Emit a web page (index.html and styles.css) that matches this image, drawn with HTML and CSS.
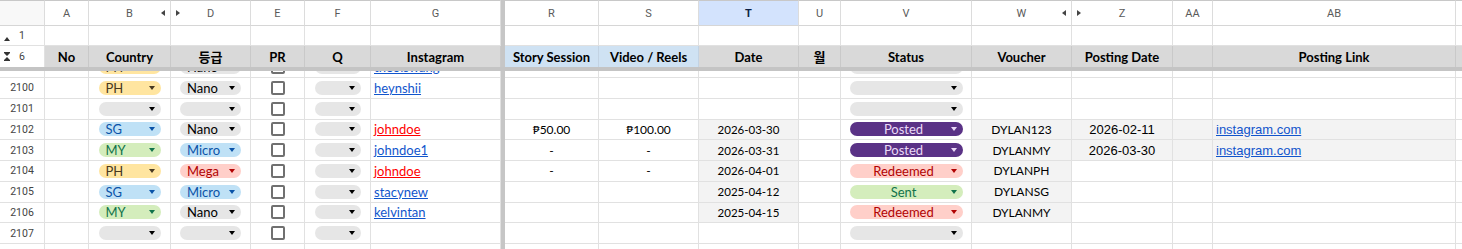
FILE: index.html
```html
<!DOCTYPE html>
<html lang="en">
<head>
<meta charset="utf-8">
<title>Sheet</title>
<link rel="stylesheet" href="styles.css">
</head>
<body>
<div class="sheet">
  <div class="row colhdr">
    <div class="c rh corner"></div>
    <div class="c">A</div>
    <div class="c hdr3"><span></span><span>B</span><svg class="tl" width="4" height="6" viewBox="0 0 4 6"><path d="M4 0V6L0 3Z"/></svg></div>
    <div class="c hdr3"><svg class="tr" width="4" height="6" viewBox="0 0 4 6"><path d="M0 0V6L4 3Z"/></svg><span>D</span><span></span></div>
    <div class="c">E</div>
    <div class="c">F</div>
    <div class="c">G</div>
    <div class="c fz"></div>
    <div class="c">R</div>
    <div class="c">S</div>
    <div class="c sel">T</div>
    <div class="c">U</div>
    <div class="c">V</div>
    <div class="c hdr3"><span></span><span>W</span><svg class="tl" width="4" height="6" viewBox="0 0 4 6"><path d="M4 0V6L0 3Z"/></svg></div>
    <div class="c hdr3"><svg class="tr" width="4" height="6" viewBox="0 0 4 6"><path d="M0 0V6L4 3Z"/></svg><span>Z</span><span></span></div>
    <div class="c">AA</div>
    <div class="c">AB</div>
    <div class="c end"></div>
  </div>

  <div class="row r1">
    <div class="c rh rh3"><svg class="up" width="6" height="4" viewBox="0 0 6 4"><path d="M0 4L3 0L6 4Z"/></svg><span>1</span><span></span></div>
    <div class="c"></div><div class="c"></div><div class="c"></div><div class="c"></div><div class="c"></div><div class="c"></div>
    <div class="c fz"></div>
    <div class="c"></div><div class="c"></div><div class="c"></div><div class="c"></div><div class="c"></div><div class="c"></div><div class="c"></div><div class="c"></div><div class="c"></div>
    <div class="c end"></div>
  </div>

  <div class="row r6">
    <div class="c rh rh3"><svg class="hg" width="6" height="9" viewBox="0 0 6 9"><path d="M0 0H6V1L3 4L0 1Z M0 9H6V8L3 5L0 8Z"/></svg><span>6</span><span></span></div>
    <div class="c">No</div>
    <div class="c">Country</div>
    <div class="c">등급</div>
    <div class="c">PR</div>
    <div class="c">Q</div>
    <div class="c">Instagram</div>
    <div class="c fz"></div>
    <div class="c blue">Story Session</div>
    <div class="c blue">Video / Reels</div>
    <div class="c">Date</div>
    <div class="c">월</div>
    <div class="c">Status</div>
    <div class="c">Voucher</div>
    <div class="c">Posting Date</div>
    <div class="c"></div>
    <div class="c">Posting Link</div>
    <div class="c end"></div>
  </div>

  <div class="freeze"></div>

  <div class="viewport">
    <div class="row br partial">
      <div class="c rh">2099</div>
      <div class="c"></div>
      <div class="c"><span class="chip w-b ph"><span class="t">PH</span><i class="caret"></i></span></div>
      <div class="c"><span class="chip w-d"><span class="t">Nano</span><i class="caret"></i></span></div>
      <div class="c"><span class="cb"></span></div>
      <div class="c"><span class="chip w-f"><span class="t"></span><i class="caret"></i></span></div>
      <div class="c l"><span class="lnk">theoiswang</span></div>
      <div class="c fz"></div>
      <div class="c"></div><div class="c"></div><div class="c"></div><div class="c"></div>
      <div class="c"><span class="chip w-v"><span class="t"></span><i class="caret"></i></span></div>
      <div class="c"></div><div class="c"></div><div class="c"></div><div class="c"></div>
      <div class="c end"></div>
    </div>

    <div class="row br">
      <div class="c rh">2100</div>
      <div class="c"></div>
      <div class="c"><span class="chip w-b ph"><span class="t">PH</span><i class="caret"></i></span></div>
      <div class="c"><span class="chip w-d"><span class="t">Nano</span><i class="caret"></i></span></div>
      <div class="c"><span class="cb"></span></div>
      <div class="c"><span class="chip w-f"><span class="t"></span><i class="caret"></i></span></div>
      <div class="c l"><span class="lnk">heynshii</span></div>
      <div class="c fz"></div>
      <div class="c"></div><div class="c"></div><div class="c"></div><div class="c"></div>
      <div class="c"><span class="chip w-v"><span class="t"></span><i class="caret"></i></span></div>
      <div class="c"></div><div class="c"></div><div class="c"></div><div class="c"></div>
      <div class="c end"></div>
    </div>

    <div class="row br">
      <div class="c rh">2101</div>
      <div class="c"></div>
      <div class="c"><span class="chip w-b"><span class="t"></span><i class="caret"></i></span></div>
      <div class="c"><span class="chip w-d"><span class="t"></span><i class="caret"></i></span></div>
      <div class="c"><span class="cb"></span></div>
      <div class="c"><span class="chip w-f"><span class="t"></span><i class="caret"></i></span></div>
      <div class="c l"></div>
      <div class="c fz"></div>
      <div class="c"></div><div class="c"></div><div class="c"></div><div class="c"></div>
      <div class="c"><span class="chip w-v"><span class="t"></span><i class="caret"></i></span></div>
      <div class="c"></div><div class="c"></div><div class="c"></div><div class="c"></div>
      <div class="c end"></div>
    </div>

    <div class="row br">
      <div class="c rh">2102</div>
      <div class="c"></div>
      <div class="c"><span class="chip w-b sg"><span class="t">SG</span><i class="caret"></i></span></div>
      <div class="c"><span class="chip w-d"><span class="t">Nano</span><i class="caret"></i></span></div>
      <div class="c"><span class="cb"></span></div>
      <div class="c"><span class="chip w-f"><span class="t"></span><i class="caret"></i></span></div>
      <div class="c l"><span class="lnk red">johndoe</span></div>
      <div class="c fz"></div>
      <div class="c num">₱50.00</div>
      <div class="c num">₱100.00</div>
      <div class="c g dt">2026-03-30</div>
      <div class="c"></div>
      <div class="c"><span class="chip w-v ctr posted"><span class="t">Posted</span><i class="caret"></i></span></div>
      <div class="c g vc">DYLAN123</div>
      <div class="c g ar">2026-02-11</div>
      <div class="c g"></div>
      <div class="c g l ar"><span class="lnk">instagram.com</span></div>
      <div class="c end"></div>
    </div>

    <div class="row br">
      <div class="c rh">2103</div>
      <div class="c"></div>
      <div class="c"><span class="chip w-b my"><span class="t">MY</span><i class="caret"></i></span></div>
      <div class="c"><span class="chip w-d sg"><span class="t">Micro</span><i class="caret"></i></span></div>
      <div class="c"><span class="cb"></span></div>
      <div class="c"><span class="chip w-f"><span class="t"></span><i class="caret"></i></span></div>
      <div class="c l"><span class="lnk">johndoe1</span></div>
      <div class="c fz"></div>
      <div class="c num">-</div>
      <div class="c num">-</div>
      <div class="c g dt">2026-03-31</div>
      <div class="c"></div>
      <div class="c"><span class="chip w-v ctr posted"><span class="t">Posted</span><i class="caret"></i></span></div>
      <div class="c g vc">DYLANMY</div>
      <div class="c g ar">2026-03-30</div>
      <div class="c g"></div>
      <div class="c g l ar"><span class="lnk">instagram.com</span></div>
      <div class="c end"></div>
    </div>

    <div class="row br">
      <div class="c rh">2104</div>
      <div class="c"></div>
      <div class="c"><span class="chip w-b ph"><span class="t">PH</span><i class="caret"></i></span></div>
      <div class="c"><span class="chip w-d rd"><span class="t">Mega</span><i class="caret"></i></span></div>
      <div class="c"><span class="cb"></span></div>
      <div class="c"><span class="chip w-f"><span class="t"></span><i class="caret"></i></span></div>
      <div class="c l"><span class="lnk red">johndoe</span></div>
      <div class="c fz"></div>
      <div class="c num">-</div>
      <div class="c num">-</div>
      <div class="c g dt">2026-04-01</div>
      <div class="c"></div>
      <div class="c"><span class="chip w-v ctr rd"><span class="t">Redeemed</span><i class="caret"></i></span></div>
      <div class="c g vc">DYLANPH</div>
      <div class="c"></div>
      <div class="c"></div>
      <div class="c"></div>
      <div class="c end"></div>
    </div>

    <div class="row br">
      <div class="c rh">2105</div>
      <div class="c"></div>
      <div class="c"><span class="chip w-b sg"><span class="t">SG</span><i class="caret"></i></span></div>
      <div class="c"><span class="chip w-d sg"><span class="t">Micro</span><i class="caret"></i></span></div>
      <div class="c"><span class="cb"></span></div>
      <div class="c"><span class="chip w-f"><span class="t"></span><i class="caret"></i></span></div>
      <div class="c l"><span class="lnk">stacynew</span></div>
      <div class="c fz"></div>
      <div class="c"></div>
      <div class="c"></div>
      <div class="c g dt">2025-04-12</div>
      <div class="c"></div>
      <div class="c"><span class="chip w-v ctr my"><span class="t">Sent</span><i class="caret"></i></span></div>
      <div class="c g vc">DYLANSG</div>
      <div class="c"></div>
      <div class="c"></div>
      <div class="c"></div>
      <div class="c end"></div>
    </div>

    <div class="row br">
      <div class="c rh">2106</div>
      <div class="c"></div>
      <div class="c"><span class="chip w-b my"><span class="t">MY</span><i class="caret"></i></span></div>
      <div class="c"><span class="chip w-d"><span class="t">Nano</span><i class="caret"></i></span></div>
      <div class="c"><span class="cb"></span></div>
      <div class="c"><span class="chip w-f"><span class="t"></span><i class="caret"></i></span></div>
      <div class="c l"><span class="lnk">kelvintan</span></div>
      <div class="c fz"></div>
      <div class="c"></div>
      <div class="c"></div>
      <div class="c g dt">2025-04-15</div>
      <div class="c"></div>
      <div class="c"><span class="chip w-v ctr rd"><span class="t">Redeemed</span><i class="caret"></i></span></div>
      <div class="c g vc">DYLANMY</div>
      <div class="c"></div>
      <div class="c"></div>
      <div class="c"></div>
      <div class="c end"></div>
    </div>

    <div class="row br">
      <div class="c rh">2107</div>
      <div class="c"></div>
      <div class="c"><span class="chip w-b"><span class="t"></span><i class="caret"></i></span></div>
      <div class="c"><span class="chip w-d"><span class="t"></span><i class="caret"></i></span></div>
      <div class="c"><span class="cb"></span></div>
      <div class="c"><span class="chip w-f"><span class="t"></span><i class="caret"></i></span></div>
      <div class="c l"></div>
      <div class="c fz"></div>
      <div class="c"></div><div class="c"></div><div class="c"></div><div class="c"></div>
      <div class="c"><span class="chip w-v"><span class="t"></span><i class="caret"></i></span></div>
      <div class="c"></div><div class="c"></div><div class="c"></div><div class="c"></div>
      <div class="c end"></div>
    </div>

    <div class="row br">
      <div class="c rh">2108</div>
      <div class="c"></div><div class="c"></div><div class="c"></div><div class="c"></div><div class="c"></div><div class="c"></div>
      <div class="c fz"></div>
      <div class="c"></div><div class="c"></div><div class="c"></div><div class="c"></div><div class="c"></div><div class="c"></div><div class="c"></div><div class="c"></div><div class="c"></div>
      <div class="c end"></div>
    </div>
  </div>
</div>
</body>
</html>
```

FILE: styles.css
```css
* { box-sizing: border-box; }

html, body {
  margin: 0;
  background: #ffffff;
  overflow: hidden;
}

body {
  width: 1462px;
  height: 249px;
  font-family: Lato, "Noto Sans CJK KR", sans-serif;
  font-size: 13px;
  color: #000000;
}

.row {
  display: grid;
  grid-template-columns: 45px 44px 82px 80px 54px 66px 130px 4px 94px 100px 100px 42px 131px 100px 101px 40px 243px 6px;
}

.c {
  display: flex;
  align-items: center;
  justify-content: center;
  min-width: 0;
  overflow: hidden;
  white-space: nowrap;
  border-right: 1px solid #e1e1e1;
  border-bottom: 1px solid #e1e1e1;
}

.c.fz {
  background: #c6c6c6;
  border: none;
}

.c.end {
  border-right: none;
}

/* column header */
.colhdr {
  height: 26px;
}

.colhdr .c {
  border-top: 1px solid #c8c8c8;
  border-bottom-color: #d6d6d6;
  border-right-color: #dcdcdc;
  font-family: Roboto, "Liberation Sans", sans-serif;
  font-size: 11px;
  color: #5a5a5a;
}

.colhdr .c.fz {
  border: none;
}

.colhdr .corner {
  background: #f8f8f8;
}

.colhdr .sel {
  background: #d3e3fd;
  color: #0b1f44;
  font-weight: 700;
}

.hdr3 {
  display: grid;
  grid-template-columns: 1fr auto 1fr;
  align-items: center;
}

.hdr3 .tl {
  justify-self: end;
  margin-right: 5px;
  fill: #444444;
}

.hdr3 .tr {
  justify-self: start;
  margin-left: 5px;
  fill: #444444;
}

/* row headers */
.rh {
  font-family: Roboto, "Liberation Sans", sans-serif;
  font-size: 10.5px;
  color: #444444;
  background: #ffffff;
}

.rh3 {
  display: grid;
  grid-template-columns: 1fr auto 1fr;
  align-items: center;
}

.rh3 svg {
  fill: #333333;
  justify-self: start;
  margin-left: 4px;
}

.rh3 .up {
  align-self: end;
  margin-bottom: 4px;
}

.r1 {
  height: 20px;
}

.r6 {
  height: 21px;
}

.r6 .c {
  background: #d9d9d9;
  font-weight: 700;
  border-right-color: #c9c9c9;
  border-bottom: none;
}

.r6 .c.rh {
  background: #ffffff;
  font-weight: 400;
  border-right-color: #e1e1e1;
}

.r6 .c.blue {
  background: #cfe2f3;
  border-right-color: #c3d3e3;
}

.r6 .c.fz {
  background: #c6c6c6;
  border: none;
}

.freeze {
  height: 4px;
  background: #c4c4c4;
}

/* body */
.viewport {
  height: 178px;
  overflow: hidden;
}

.br {
  height: 20.75px;
}

.partial {
  margin-top: -13.75px;
}

.c.l {
  justify-content: flex-start;
  padding-left: 3px;
}

.c.g {
  background: #f3f3f3;
}

.num {
  font-size: 12px;
}

.dt {
  font-size: 11.5px;
}

.vc {
  font-size: 12px;
}

.ar {
  font-family: "Liberation Sans", Arial, sans-serif;
  font-size: 13px;
}

.lnk {
  color: #1155cc;
  text-decoration: underline;
}

.lnk.red {
  color: #ff0000;
}

/* chips */
.chip {
  display: flex;
  align-items: center;
  height: 14px;
  border-radius: 7px;
  padding: 0 6px 0 7px;
  font-size: 13px;
  line-height: 14px;
  background: #e6e6e6;
  color: #000000;
}

.chip .t {
  flex: 1;
  min-width: 0;
}

.chip.ctr .t {
  text-align: center;
}

.caret {
  width: 0;
  height: 0;
  border-left: 3.5px solid transparent;
  border-right: 3.5px solid transparent;
  border-top: 4px solid currentColor;
}

.w-b { width: 62px; }
.w-d { width: 61px; }
.w-f { width: 46px; }
.w-v { width: 113px; }

.chip.ph { background: #ffe5a0; color: #473821; }
.chip.sg { background: #bfe1f6; color: #0a53a8; }
.chip.my { background: #d4edbc; color: #11734b; }
.chip.rd { background: #ffcfc9; color: #b10202; }
.chip.posted { background: #5a3286; color: #ead9f7; }

.cb {
  width: 14px;
  height: 14px;
  border: 2px solid #707070;
  border-radius: 2px;
}
```
